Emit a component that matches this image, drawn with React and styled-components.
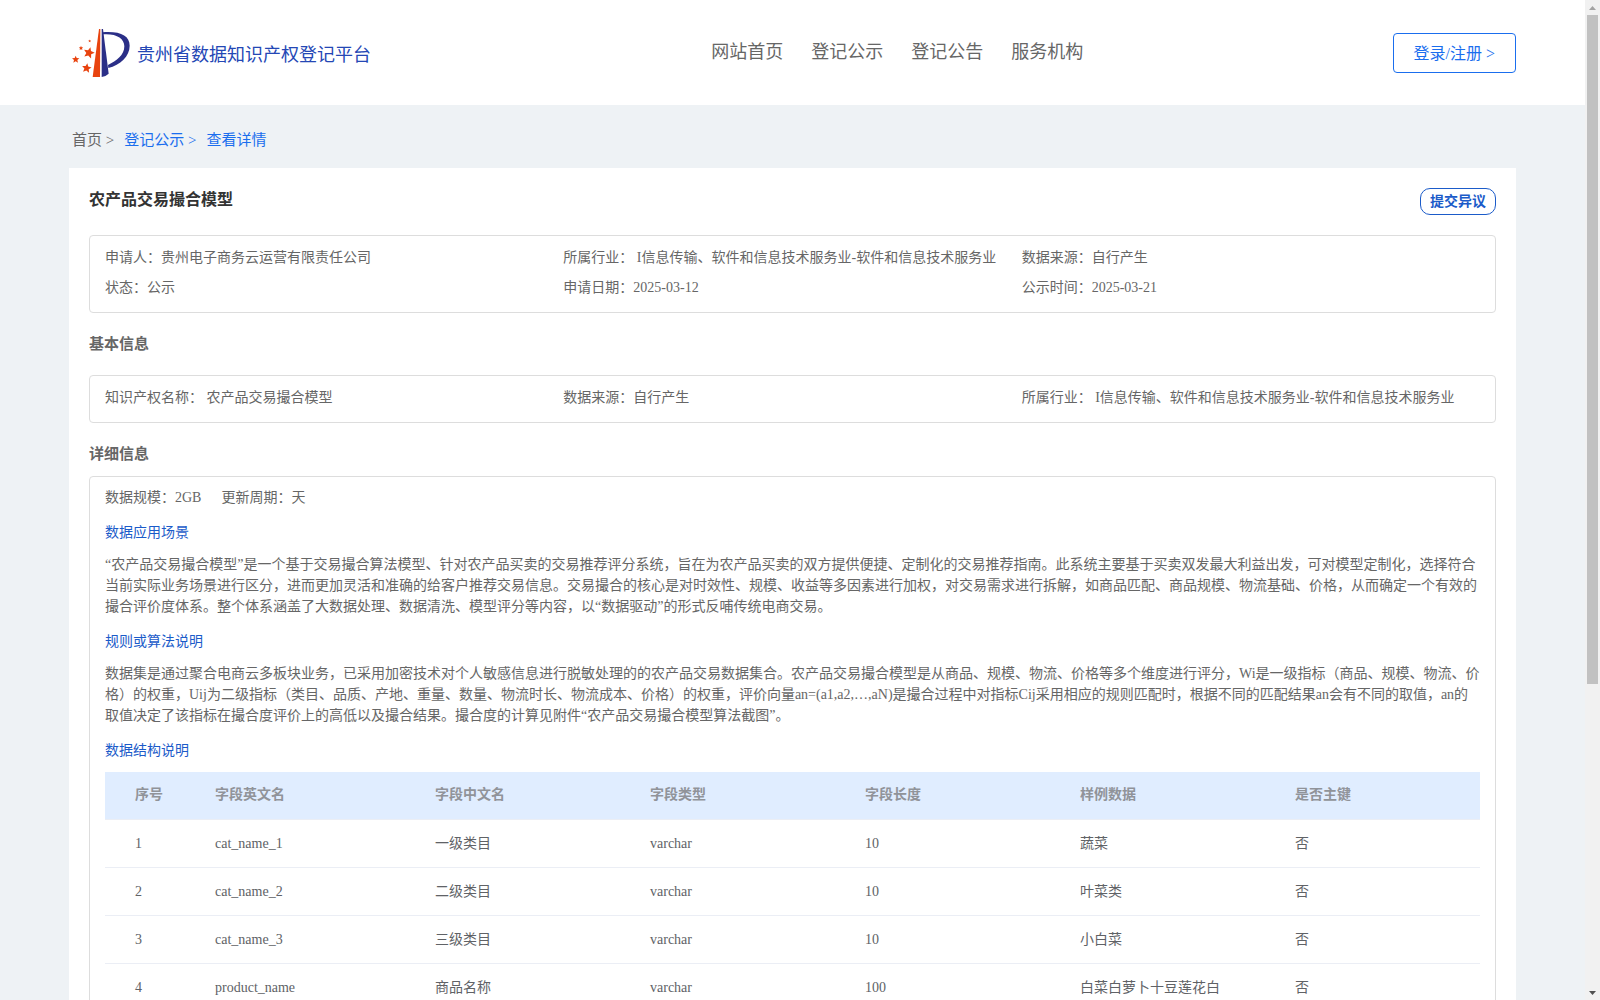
import styled, { createGlobalStyle } from "styled-components";

const GlobalStyle = createGlobalStyle`
  * {
    box-sizing: border-box;
  }
  body {
    margin: 0;
    background-color: #eef2f5;
    font-family: "Liberation Serif", "Noto Sans CJK SC", serif;
    font-size: 14px;
    color: #666;
    text-spacing-trim: space-all;
  }
  h1, h2, h3, p, dl, dd, dt {
    margin: 0;
  }
  a {
    text-decoration: none;
  }
`;

// 화면 전체: 본문 + 오른쪽 스크롤바
const Screen = styled.div`
  display: flex;
  height: 100vh;
  overflow: hidden;
`;

const Page = styled.div`
  flex: 1;
  min-width: 0;
  overflow-y: auto;
  scrollbar-width: none;
`;

const ScrollTrack = styled.div`
  width: 15px;
  display: flex;
  flex-direction: column;
  align-items: center;
  background-color: #f1f1f1;
`;

const ScrollArrow = styled.div`
  height: 15px;
  display: flex;
  align-items: center;
  color: ${(props) => (props.$active ? "#505050" : "#a3a3a3")};
`;

const ScrollRail = styled.div`
  flex: 1;
  width: 11px;
`;

const ScrollThumb = styled.div`
  height: 69%;
  background-color: #c1c1c1;
`;

const Header = styled.header`
  height: 105px;
  padding: 0 69px;
  display: flex;
  align-items: center;
  justify-content: space-between;
  background-color: #fff;
`;

const Brand = styled.a`
  width: 333px;
  padding-left: 3px;
  display: flex;
  align-items: center;
  gap: 7px;
  color: #2447b5;
  font-size: 18px;
  line-height: 24px;
  white-space: nowrap;
`;

const BrandName = styled.span`
  padding-top: 4px;
`;

const Nav = styled.nav`
  display: flex;
  gap: 28px;
`;

const NavLink = styled.a`
  color: #666;
  font-size: 18px;
  line-height: 24px;
  padding-bottom: 2px;
`;

const LoginButton = styled.button`
  height: 40px;
  padding: 0 20px 2px;
  border: 1px solid #1a6eee;
  border-radius: 4px;
  background-color: #fff;
  color: #1a6eee;
  font-family: inherit;
  font-size: 16px;
  cursor: pointer;
`;

const Breadcrumb = styled.nav`
  height: 63px;
  padding: 4px 72px 0;
  display: flex;
  align-items: center;
  gap: 10px;
  font-size: 15px;
`;

const Crumb = styled.a`
  color: ${(props) => (props.$active ? "#1a6eee" : "#666")};
`;

const Card = styled.main`
  margin: 0 69px;
  padding: 20px;
  background-color: #fff;
`;

const TitleRow = styled.div`
  display: flex;
  justify-content: space-between;
  align-items: flex-start;
  margin-bottom: 20px;
`;

const Title = styled.h1`
  font-size: 16px;
  line-height: 24px;
  color: #333;
`;

const ObjectionButton = styled.button`
  height: 27px;
  padding: 0 9px;
  border: 1px solid #1b5bc9;
  border-radius: 10px;
  background-color: #fff;
  color: #1b5bc9;
  font-family: inherit;
  font-size: 14px;
  font-weight: bold;
  line-height: 24px;
  cursor: pointer;
`;

const SectionTitle = styled.h2`
  font-size: 15px;
  line-height: 20px;
  margin: ${(props) => (props.$compact ? "21px 0 12px" : "21px 0")};
`;

const InfoBox = styled.dl`
  display: grid;
  grid-template-columns: repeat(3, 1fr);
  padding: 7px 15px 9px;
  border: 1px solid #ddd;
  border-radius: 4px;
`;

const InfoItem = styled.div`
  display: flex;
  line-height: 30px;
  white-space: pre;
`;

const DetailBox = styled.section`
  padding: 10px 15px;
  border: 1px solid #ddd;
  border-radius: 4px;
`;

const Summary = styled.dl`
  display: flex;
  gap: 20px;
`;

const SummaryItem = styled.div`
  display: flex;
  line-height: 21px;
`;

const SubTitle = styled.h3`
  margin: 14px 0 11px;
  font-size: 14px;
  font-weight: normal;
  line-height: 21px;
  color: #1b5bc9;
`;

const Paragraph = styled.p`
  line-height: 21px;
`;

const Table = styled.table`
  width: 100%;
  table-layout: fixed;
  border-collapse: separate;
  border-spacing: 0;
  color: #606266;
  line-height: 24px;
`;

const HeadCell = styled.th`
  width: ${(props) => props.$width || "auto"};
  height: 48px;
  padding: 0 0 2px 30px;
  border-bottom: 1px solid #ebeef5;
  background-color: #e0edff;
  color: #909399;
  text-align: left;
`;

const Cell = styled.td`
  height: 48px;
  padding: 0 0 0 30px;
  border-bottom: 1px solid #ebeef5;
`;

const navItems = ["网站首页", "登记公示", "登记公告", "服务机构"];

const applyInfo = [
  ["申请人：", "贵州电子商务云运营有限责任公司"],
  ["所属行业：", " I信息传输、软件和信息技术服务业-软件和信息技术服务业"],
  ["数据来源：", "自行产生"],
  ["状态：", "公示"],
  ["申请日期：", "2025-03-12"],
  ["公示时间：", "2025-03-21"],
];

const basicInfo = [
  ["知识产权名称：", " 农产品交易撮合模型"],
  ["数据来源：", "自行产生"],
  ["所属行业：", " I信息传输、软件和信息技术服务业-软件和信息技术服务业"],
];

const columns = [
  { label: "序号", width: "80px" },
  { label: "字段英文名", width: "220px" },
  { label: "字段中文名" },
  { label: "字段类型" },
  { label: "字段长度" },
  { label: "样例数据" },
  { label: "是否主键" },
];

const rows = [
  ["1", "cat_name_1", "一级类目", "varchar", "10", "蔬菜", "否"],
  ["2", "cat_name_2", "二级类目", "varchar", "10", "叶菜类", "否"],
  ["3", "cat_name_3", "三级类目", "varchar", "10", "小白菜", "否"],
  ["4", "product_name", "商品名称", "varchar", "100", "白菜白萝卜十豆莲花白", "否"],
];

const star = "0,-11 3,-4 11,-3 5,2 7,10 0,6 -7,10 -5,2 -11,-3 -3,-4";

const Logo = () => (
  <svg width="58" height="52" viewBox="36 36 174 156" aria-hidden="true">
    <path d="M117 42h4l-1 144H98z" fill="#e8430f" />
    <path d="M125 42h4l17 134q-8 8-21 10z" fill="#2b2f87" />
    <path
      d="M128 52C180 48 209 62 209 92c0 32-28 58-64 67l-1-9c26-12 49-30 49-56 0-24-24-39-65-36z"
      fill="#2b2f87"
    />
    <g fill="#e8430f">
      <polygon points={star} transform="translate(87 113) rotate(15) scale(1.5)" />
      <polygon points={star} transform="translate(80 159) rotate(8) scale(1.3)" />
      <polygon points={star} transform="translate(47 133)" />
      <polygon points={star} transform="translate(63 99) scale(.6)" />
      <polygon points={star} transform="translate(89 78) scale(.4)" />
    </g>
  </svg>
);

const InfoList = ({ items }) => (
  <InfoBox>
    {items.map(([label, value]) => (
      <InfoItem key={label}>
        <dt>{label}</dt>
        <dd>{value}</dd>
      </InfoItem>
    ))}
  </InfoBox>
);

const App = () => {
  return (
    <>
      <GlobalStyle />
      <Screen>
        <Page>
          <Header>
            <Brand href="#">
              <Logo />
              <BrandName>贵州省数据知识产权登记平台</BrandName>
            </Brand>
            <Nav>
              {navItems.map((item) => (
                <NavLink href="#" key={item}>
                  {item}
                </NavLink>
              ))}
            </Nav>
            <LoginButton type="button">登录/注册 &gt;</LoginButton>
          </Header>

          <Breadcrumb>
            <Crumb href="#">首页 &gt;</Crumb>
            <Crumb href="#" $active>
              登记公示 &gt;
            </Crumb>
            <Crumb href="#" $active>
              查看详情
            </Crumb>
          </Breadcrumb>

          <Card>
            <TitleRow>
              <Title>农产品交易撮合模型</Title>
              <ObjectionButton type="button">提交异议</ObjectionButton>
            </TitleRow>
            <InfoList items={applyInfo} />

            <SectionTitle>基本信息</SectionTitle>
            <InfoList items={basicInfo} />

            <SectionTitle $compact>详细信息</SectionTitle>
            <DetailBox>
              <Summary>
                <SummaryItem>
                  <dt>数据规模：</dt>
                  <dd>2GB</dd>
                </SummaryItem>
                <SummaryItem>
                  <dt>更新周期：</dt>
                  <dd>天</dd>
                </SummaryItem>
              </Summary>

              <SubTitle>数据应用场景</SubTitle>
              <Paragraph>
                “农产品交易撮合模型”是一个基于交易撮合算法模型、针对农产品买卖的交易推荐评分系统，旨在为农产品买卖的双方提供便捷、定制化的交易推荐指南。此系统主要基于买卖双发最大利益出发，可对模型定制化，选择符合当前实际业务场景进行区分，进而更加灵活和准确的给客户推荐交易信息。交易撮合的核心是对时效性、规模、收益等多因素进行加权，对交易需求进行拆解，如商品匹配、商品规模、物流基础、价格，从而确定一个有效的撮合评价度体系。整个体系涵盖了大数据处理、数据清洗、模型评分等内容，以“数据驱动”的形式反哺传统电商交易。
              </Paragraph>

              <SubTitle>规则或算法说明</SubTitle>
              <Paragraph>
                数据集是通过聚合电商云多板块业务，已采用加密技术对个人敏感信息进行脱敏处理的的农产品交易数据集合。农产品交易撮合模型是从商品、规模、物流、价格等多个维度进行评分，Wi是一级指标（商品、规模、物流、价格）的权重，Uij为二级指标（类目、品质、产地、重量、数量、物流时长、物流成本、价格）的权重，评价向量an=(a1,a2,…,aN)是撮合过程中对指标Cij采用相应的规则匹配时，根据不同的匹配结果an会有不同的取值，an的取值决定了该指标在撮合度评价上的高低以及撮合结果。撮合度的计算见附件“农产品交易撮合模型算法截图”。
              </Paragraph>

              <SubTitle>数据结构说明</SubTitle>
              <Table>
                <thead>
                  <tr>
                    {columns.map((col) => (
                      <HeadCell key={col.label} $width={col.width} scope="col">
                        {col.label}
                      </HeadCell>
                    ))}
                  </tr>
                </thead>
                <tbody>
                  {rows.map((row) => (
                    <tr key={row[0]}>
                      {row.map((value, index) => (
                        <Cell key={columns[index].label}>{value}</Cell>
                      ))}
                    </tr>
                  ))}
                </tbody>
              </Table>
            </DetailBox>
          </Card>
        </Page>

        <ScrollTrack aria-hidden="true">
          <ScrollArrow>
            <svg width="7" height="4" viewBox="0 0 7 4">
              <path d="M0 4L3.5 0 7 4z" fill="currentColor" />
            </svg>
          </ScrollArrow>
          <ScrollRail>
            <ScrollThumb />
          </ScrollRail>
          <ScrollArrow $active>
            <svg width="7" height="4" viewBox="0 0 7 4">
              <path d="M0 0h7L3.5 4z" fill="currentColor" />
            </svg>
          </ScrollArrow>
        </ScrollTrack>
      </Screen>
    </>
  );
};

export default App;
